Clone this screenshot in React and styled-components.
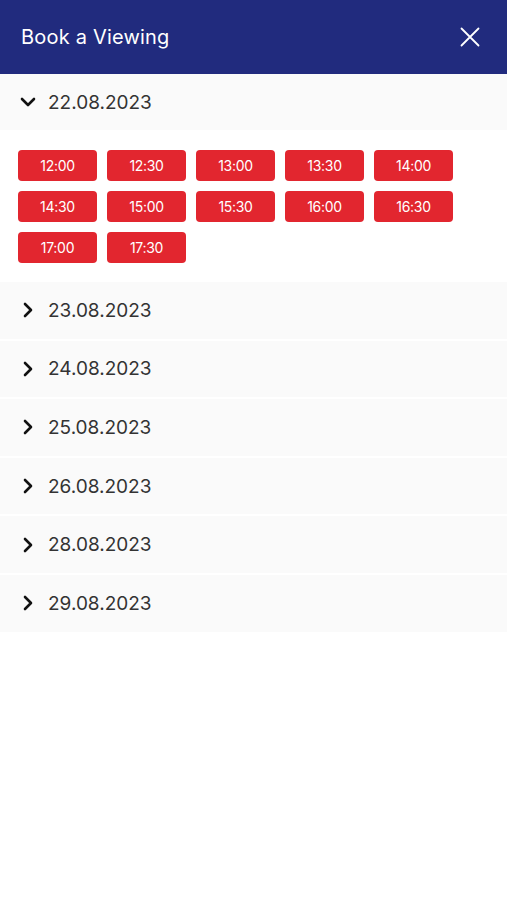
import React, { useState } from "react";
import styled, { createGlobalStyle } from "styled-components";

const Global = createGlobalStyle`
  html, body { margin: 0; padding: 0; background: #fff; }
  body { font-family: "Inter", "Noto Sans", sans-serif; }
`;

const Page = styled.div`
  width: 507px;
  min-height: 900px;
  background: #fff;
  display: flex;
  flex-direction: column;
`;

const Header = styled.header`
  height: 74px;
  background: #212b7e;
  display: flex;
  align-items: center;
  justify-content: space-between;
  padding: 0 27px 0 21px;
  box-sizing: border-box;
`;

const Title = styled.h1`
  margin: 0;
  color: #fff;
  font-size: 20px;
  font-weight: 400;
  letter-spacing: 0.2px;
`;

const CloseButton = styled.button`
  border: 0;
  background: transparent;
  padding: 0;
  display: flex;
  cursor: pointer;
`;

const List = styled.div`
  display: flex;
  flex-direction: column;
  gap: 2px;
`;

const Item = styled.div`
  display: flex;
  flex-direction: column;
`;

const RowHead = styled.button`
  height: ${(p) => (p.$first ? "56px" : "56.6px")};
  border: 0;
  background: #fafafa;
  display: flex;
  align-items: center;
  gap: 12px;
  padding: 0 0 0 20px;
  font-family: inherit;
  font-size: 19px;
  color: #333;
  cursor: pointer;
  text-align: left;
`;

const Slots = styled.div`
  display: flex;
  flex-wrap: wrap;
  gap: 10px;
  padding: 20px 18px 17px;
  width: 460px;
  box-sizing: content-box;
`;

const Slot = styled.button`
  width: 79px;
  height: 31px;
  border: 0;
  border-radius: 4px;
  background: #e2262f;
  color: #fff;
  font-family: inherit;
  font-size: 14px;
  letter-spacing: -0.3px;
  cursor: pointer;
  padding: 0;
`;

const Chevron = ({ open }) => (
  <svg width="16" height="16" viewBox="0 0 16 16" fill="none" stroke="#111" strokeWidth="2.6" strokeLinecap="round" strokeLinejoin="round">
    {open ? <path d="M2 5 L8 11 L14 5" /> : <path d="M5 2 L11 8 L5 14" />}
  </svg>
);

const dates = [
  { d: "22.08.2023", slots: ["12:00","12:30","13:00","13:30","14:00","14:30","15:00","15:30","16:00","16:30","17:00","17:30"] },
  { d: "23.08.2023" },
  { d: "24.08.2023" },
  { d: "25.08.2023" },
  { d: "26.08.2023" },
  { d: "28.08.2023" },
  { d: "29.08.2023" },
];

export default function App() {
  const [open, setOpen] = useState(0);
  return (
    <Page>
      <Global />
      <Header>
        <Title>Book a Viewing</Title>
        <CloseButton aria-label="Close">
          <svg width="20" height="20" viewBox="0 0 20 20" stroke="#fff" strokeWidth="1.8" strokeLinecap="round">
            <path d="M1.5 1.5 L18.5 18.5 M18.5 1.5 L1.5 18.5" />
          </svg>
        </CloseButton>
      </Header>
      <List>
        {dates.map((x, i) => (
          <Item key={x.d}>
            <RowHead $first={i === 0} onClick={() => setOpen(open === i ? -1 : i)}>
              <Chevron open={open === i} />
              {x.d}
            </RowHead>
            {open === i && x.slots && (
              <Slots>
                {x.slots.map((s) => (
                  <Slot key={s}>{s}</Slot>
                ))}
              </Slots>
            )}
          </Item>
        ))}
      </List>
    </Page>
  );
}
